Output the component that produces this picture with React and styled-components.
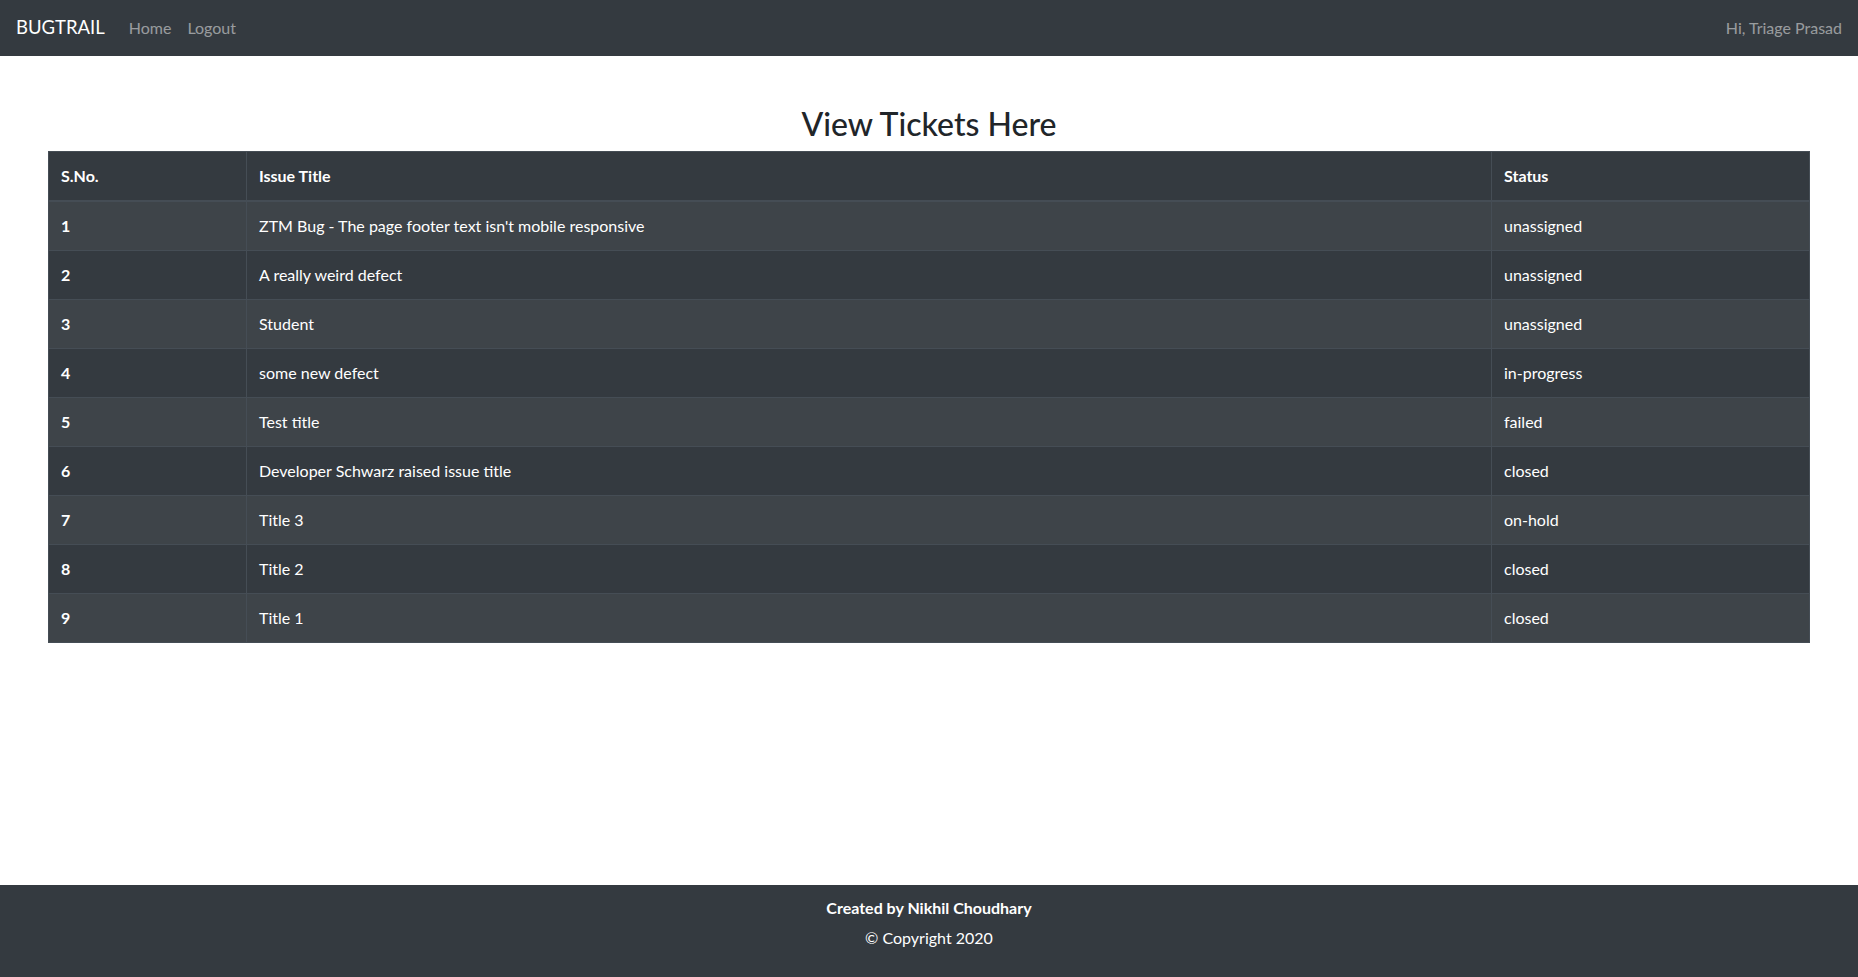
import React from "react";
import styled, { createGlobalStyle } from "styled-components";

const GlobalStyle = createGlobalStyle`
  * { box-sizing: border-box; }
  body {
    margin: 0;
    font-family: Lato, "Open Sans", sans-serif;
    font-size: 16px;
    line-height: 1.5;
    color: #212529;
    background: #fff;
  }
`;

const tickets = [
  { id: 1, title: "ZTM Bug - The page footer text isn't mobile responsive", status: "unassigned" },
  { id: 2, title: "A really weird defect", status: "unassigned" },
  { id: 3, title: "Student", status: "unassigned" },
  { id: 4, title: "some new defect", status: "in-progress" },
  { id: 5, title: "Test title", status: "failed" },
  { id: 6, title: "Developer Schwarz raised issue title", status: "closed" },
  { id: 7, title: "Title 3", status: "on-hold" },
  { id: 8, title: "Title 2", status: "closed" },
  { id: 9, title: "Title 1", status: "closed" },
];

export default function App() {
  return (
    <Page>
      <GlobalStyle />
      <NavBar>
        <NavLeft>
          <Brand>BUGTRAIL</Brand>
          <NavLink>Home</NavLink>
          <NavLink>Logout</NavLink>
        </NavLeft>
        <NavLink>Hi, Triage Prasad</NavLink>
      </NavBar>
      <Main>
        <Heading>View Tickets Here</Heading>
        <Table>
          <thead>
            <tr>
              <HeadCell style={{ width: 198 }}>S.No.</HeadCell>
              <HeadCell>Issue Title</HeadCell>
              <HeadCell style={{ width: 318 }}>Status</HeadCell>
            </tr>
          </thead>
          <tbody>
            {tickets.map((t, i) => (
              <Row key={t.id} $striped={i % 2 === 0}>
                <Th>{t.id}</Th>
                <Td>{t.title}</Td>
                <Td>{t.status}</Td>
              </Row>
            ))}
          </tbody>
        </Table>
      </Main>
      <Footer>
        <FooterStrong>Created by Nikhil Choudhary</FooterStrong>
        <FooterLine>© Copyright 2020</FooterLine>
      </Footer>
    </Page>
  );
}

const Page = styled.div`
  min-height: 100vh;
  display: flex;
  flex-direction: column;
`;

const NavBar = styled.nav`
  height: 56px;
  background: #343a40;
  display: flex;
  align-items: center;
  justify-content: space-between;
  padding: 0 16px;
`;

const NavLeft = styled.div`
  display: flex;
  align-items: center;
`;

const Brand = styled.span`
  color: #fff;
  font-size: 18.5px;
  margin-right: 16px;
`;

const NavLink = styled.span`
  color: rgba(255, 255, 255, 0.5);
  padding: 8px;
  &:last-child {
    padding-right: 0;
  }
`;

const Main = styled.main`
  flex: 1;
  padding: 49px 48px 0;
`;

const Heading = styled.h2`
  margin: 0 0 8px;
  font-size: 32px;
  font-weight: 500;
  line-height: 1.2;
  text-align: center;
`;

const Table = styled.table`
  width: 100%;
  border-collapse: collapse;
  background: #343a40;
  color: #fff;
`;

const Th = styled.th`
  text-align: left;
  font-weight: 700;
  padding: 12px;
  border: 1px solid #454d55;
`;

const HeadCell = styled(Th)`
  border-bottom-width: 2px;
`;

const Td = styled.td`
  padding: 12px;
  border: 1px solid #454d55;
`;

const Row = styled.tr`
  background: ${(p) => (p.$striped ? "rgba(255,255,255,0.05)" : "transparent")};
`;

const Footer = styled.footer`
  background: #343a40;
  color: #fff;
  text-align: center;
  padding: 11px 0 27px;
`;

const FooterStrong = styled.div`
  font-weight: 700;
  margin-bottom: 6px;
`;

const FooterLine = styled.div``;
